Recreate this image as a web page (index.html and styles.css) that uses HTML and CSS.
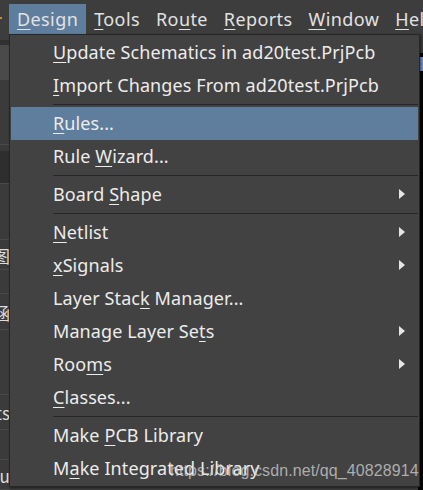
FILE: index.html
```html
<!DOCTYPE html>
<html>
  <head>
    <link rel="stylesheet" href="styles.css">
  </head>
  <body>
    <div id="menubar">
      <span class="mark"></span>
      <div class="top-item active"><u>D</u>esign</div>
      <div class="top-item"><u>T</u>ools</div>
      <div class="top-item">Ro<u>u</u>te</div>
      <div class="top-item"><u>R</u>eports</div>
      <div class="top-item"><u>W</u>indow</div>
      <div class="top-item"><u>H</u>elp</div>
    </div>
    <div id="work">
      <div id="panel">
        <div class="pn-tab"></div>
        <div class="pn-row h65"></div>
        <div class="pn-dark"></div>
        <div class="pn-row h56"></div>
        <div class="pn-row h30"><span class="pn-txt">图</span></div>
        <div class="pn-row h24"></div>
        <div class="pn-row h36"><span class="pn-txt">涵</span></div>
        <div class="pn-row h65"></div>
        <div class="pn-row h35"><span class="pn-txt">ts</span></div>
        <div class="pn-row h30"></div>
        <div class="pn-row h30"><span class="pn-txt">cu</span></div>
      </div>
      <div id="middle"></div>
      <div id="canvas">
        <div class="canvas-top"><span class="ico"></span></div>
        <div class="grid"></div>
      </div>
    </div>

    <div id="popup">
      <div class="item"><span><u>U</u>pdate Schematics in ad20test.PrjPcb</span></div>
      <div class="item"><span><u>I</u>mport Changes From ad20test.PrjPcb</span></div>
      <div class="sep"></div>
      <div class="item hover"><span><u>R</u>ules...</span></div>
      <div class="item"><span>Rule <u>W</u>izard...</span></div>
      <div class="sep"></div>
      <div class="item sub"><span>Board <u>S</u>hape</span></div>
      <div class="sep"></div>
      <div class="item sub"><span><u>N</u>etlist</span></div>
      <div class="item sub"><span><u>x</u>Signals</span></div>
      <div class="item"><span>Layer Stac<u>k</u> Manager...</span></div>
      <div class="item sub"><span>Manage Layer Se<u>t</u>s</span></div>
      <div class="item sub"><span>Roo<u>m</u>s</span></div>
      <div class="item"><span><u>C</u>lasses...</span></div>
      <div class="sep"></div>
      <div class="item"><span>Make <u>P</u>CB Library</span></div>
      <div class="item"><span>M<u>a</u>ke Integrated Library</span></div>
    </div>

    <div id="watermark">https://blog.csdn.net/qq_40828914</div>
  </body>
</html>
```

FILE: styles.css
```css
html, body {
  margin: 0;
  height: 100%;
  overflow: hidden;
}

body {
  background: #3c3c3c;
  font-family: "Noto Sans", "Open Sans", sans-serif;
  font-size: 18px;
  letter-spacing: 0.1px;
  color: #e8e8e8;
  position: relative;
}

u {
  text-decoration: underline;
  text-decoration-thickness: 1px;
  text-underline-offset: 3px;
}

/* top menu bar */
#menubar {
  height: 40px;
  display: flex;
  align-items: flex-start;
  padding-left: 9px;
  background: #3d3d3d;
  position: relative;
}

.mark {
  position: absolute;
  left: 0;
  top: 17px;
  width: 2px;
  height: 2px;
  background: #c88a3a;
}

.top-item {
  height: 30px;
  margin-top: 4px;
  padding: 0 8px;
  line-height: 30px;
  letter-spacing: 0.4px;
  color: #e2e2e2;
  white-space: nowrap;
}

.top-item.active {
  background: #5f7d9c;
}

/* stuff behind the menu */
#work {
  display: flex;
  height: 450px;
}

#panel {
  width: 10px;
  display: flex;
  flex-direction: column;
  border-top: 5px solid #313131;
}

.pn-tab {
  height: 35px;
  background: #4a4a4a;
}

.pn-row {
  flex-shrink: 0;
  background: #3b3b3b;
  border-bottom: 1px solid #4a4a4a;
  position: relative;
  overflow: hidden;
}

.pn-dark {
  height: 32px;
  background: #2e2e2e;
  border-top: 6px solid #3a3a3a;
  border-bottom: 1px solid #4a4a4a;
}

.h65 { height: 64px; }
.h56 { height: 55px; }
.h36 { height: 35px; }
.h35 { height: 34px; }
.h30 { height: 29px; }
.h24 { height: 23px; }

.pn-txt {
  position: absolute;
  right: 0;
  top: 50%;
  transform: translateY(-50%);
  font-size: 17px;
  color: #dcdcdc;
  font-family: "Noto Sans CJK SC", "Noto Sans", sans-serif;
}

#middle {
  flex: 1;
}

#canvas {
  width: 5px;
  display: flex;
  flex-direction: column;
}

.canvas-top {
  height: 13px;
  background: #3c3c3c;
  position: relative;
}

.ico {
  position: absolute;
  left: 1px;
  top: 17px;
  width: 3px;
  height: 14px;
  border-left: 1px dotted #d09040;
  background: #7090c0;
}

.grid {
  flex: 1;
  background-color: #050505;
  background-image: radial-gradient(#5a5a5a 0.6px, transparent 0.8px);
  background-size: 8px 8px;
  background-position: 2px 3px;
}

/* drop-down menu */
#popup {
  position: absolute;
  left: 9px;
  top: 34px;
  width: 407px;
  padding: 1px;
  background: #424242;
  border: 1px solid #262626;
  box-shadow: 1px 1px 2px rgba(0, 0, 0, .5);
}

.item {
  height: 33px;
  line-height: 33px;
  padding-left: 42px;
  color: #ececec;
  position: relative;
  white-space: nowrap;
}

.item.hover {
  background: #5f7d9c;
}

.item.sub::after {
  content: "";
  position: absolute;
  right: 13px;
  top: 11px;
  border-left: 6px solid #e6e6e6;
  border-top: 5px solid transparent;
  border-bottom: 5px solid transparent;
}

.sep {
  height: 5px;
  margin-left: 42px;
  position: relative;
}

.sep::before {
  content: "";
  position: absolute;
  left: 0;
  right: 0;
  top: 2px;
  height: 1px;
  background: #262626;
}

#watermark {
  position: absolute;
  left: 170px;
  top: 462px;
  font-family: "Liberation Sans", Arial, sans-serif;
  font-size: 16px;
  color: rgba(210, 210, 210, .75);
  white-space: nowrap;
}
```
